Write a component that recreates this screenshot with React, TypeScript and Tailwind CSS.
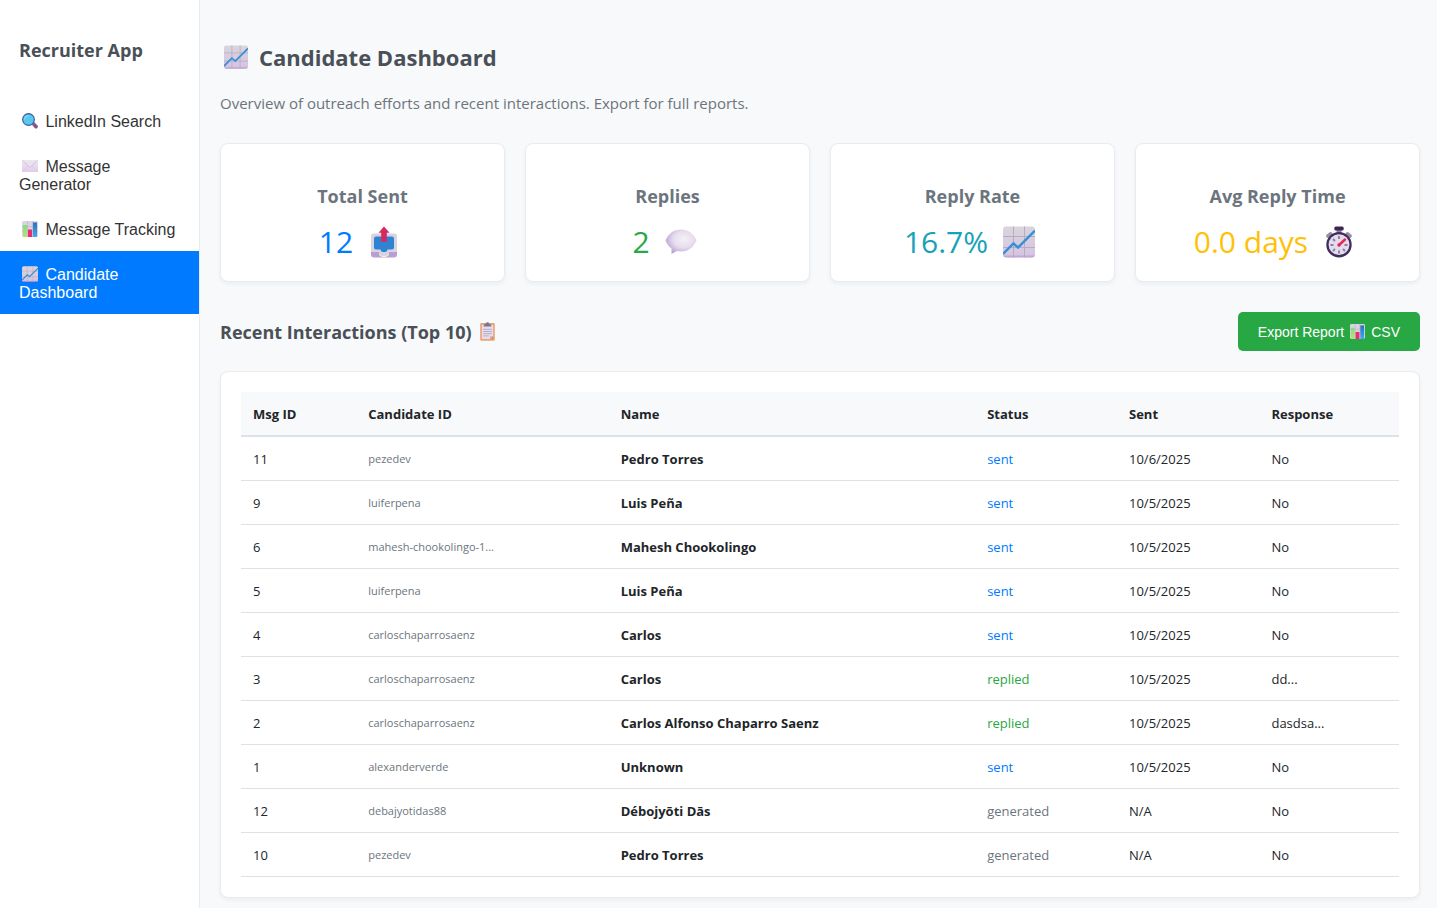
import { useId, type ReactNode } from 'react';

type IconProps = { className?: string };

function SearchIcon({ className }: IconProps) {
  return (
    <svg viewBox="0 0 32 32" className={className} aria-hidden="true">
      <path d="M20 19l3-2 8 8c1.600 2 .5 4.500-1 5.500s-3.200.6-4.500-.7L18.500 22z" fill="#835487" />
      <path d="M18 20.500l2.500-2.500 4 4-2.500 2.500z" fill="#8a7a9b" />
      <circle cx="13" cy="13" r="12.800" fill="#3c5a94" />
      <circle cx="13" cy="13" r="10.600" fill="#58c8ec" />
      <path d="M5 13a8 8 0 0 1 8-8" fill="none" stroke="#8fe0f6" strokeWidth="2" />
    </svg>
  );
}

function EnvelopeIcon({ className }: IconProps) {
  const id = useId();
  return (
    <svg viewBox="0 0 32 32" className={className} aria-hidden="true">
      <defs>
        <linearGradient id={id} x1="0" y1="0" x2="0" y2="1">
          <stop offset="0" stopColor="#eee6f2" />
          <stop offset="1" stopColor="#e2cdec" />
        </linearGradient>
      </defs>
      <rect x="0" y="4" width="32" height="24" rx="1" fill={`url(#${id})`} />
      <path d="M1 27l11-11M31 27L20 16" stroke="#d6c5e0" strokeWidth="1.200" />
      <path d="M1 5l13 12c1.300 1 2.700 1 4 0L31 5" fill="#ebe3ef" stroke="#c3b2cf" strokeWidth="1.300" />
    </svg>
  );
}

function BarChartIcon({ className }: IconProps) {
  const id = useId();
  return (
    <svg viewBox="0 0 32 32" className={className} aria-hidden="true">
      <defs>
        <linearGradient id={`${id}g`} x1="0" y1="0" x2="0" y2="1">
          <stop offset="0" stopColor="#7ce27c" />
          <stop offset="1" stopColor="#b5e36b" />
        </linearGradient>
        <linearGradient id={`${id}b`} x1="0" y1="0" x2="0" y2="1">
          <stop offset="0" stopColor="#2473bd" />
          <stop offset="1" stopColor="#48a7ee" />
        </linearGradient>
      </defs>
      <rect width="32" height="32" rx="3" fill="#dcd3e2" />
      <path d="M0 11h32M0 21h32M11 0v32M21 0v32" stroke="#b9b1c0" strokeWidth="1.300" />
      <rect x="2" y="8" width="8" height="24" fill={`url(#${id}g)`} />
      <rect x="12" y="17" width="8" height="15" fill="#e92c75" />
      <rect x="22" y="3" width="8" height="29" fill={`url(#${id}b)`} />
    </svg>
  );
}

function LineChartIcon({ className }: IconProps) {
  const id = useId();
  return (
    <svg viewBox="0 0 32 32" className={className} aria-hidden="true">
      <defs>
        <linearGradient id={id} x1="0" y1="0" x2="0" y2="1">
          <stop offset="0" stopColor="#d9d5dc" />
          <stop offset="0.900" stopColor="#d7c5e3" />
          <stop offset="1" stopColor="#b79aca" />
        </linearGradient>
      </defs>
      <rect y="0.500" width="32" height="31" rx="3" fill={`url(#${id})`} />
      <path d="M0 10.500h32M0 21.500h32M10.500 .5v31M21.500 .5v31" stroke="#b7acbd" strokeWidth="1" />
      <path d="M0 28L10.500 17.500l4.500 4L32 4.500" fill="none" stroke="#3490d8" strokeWidth="2.400" />
    </svg>
  );
}

function OutboxIcon({ className }: IconProps) {
  const id = useId();
  return (
    <svg viewBox="0 0 32 32" className={className} aria-hidden="true">
      <defs>
        <linearGradient id={id} x1="0" y1="0" x2="1" y2="0">
          <stop offset="0" stopColor="#e42a43" />
          <stop offset="1" stopColor="#c42a78" />
        </linearGradient>
      </defs>
      <rect x="3" y="9" width="26" height="22.500" rx="3" fill="#b89fd1" />
      <path d="M6 7.500h20a3 3 0 0 1 3 3V26h-8c-.8 3-2 3.500-5 3.500S11.800 29 11 26H3V10.500a3 3 0 0 1 3-3z" fill="#d8d3de" />
      <path d="M11 26.500c.8 2.500 2 3 5 3s4.200-.5 5-3v2c-1 2-2.500 2.500-5 2.500s-4-.5-5-2.500z" fill="#efedf2" />
      <path d="M8 10.500h16a2 2 0 0 1 2 2v9a2 2 0 0 1-2 2h-4.500c-.3 2-1.500 2.500-3.500 2.500s-3.200-.5-3.500-2.500H8a2 2 0 0 1-2-2v-9a2 2 0 0 1 2-2z" fill="#3083d3" />
      <path d="M16 .5l5.500 6.200h-2.700V16h-5.600V6.700h-2.700z" fill={`url(#${id})`} />
    </svg>
  );
}

function SpeechIcon({ className }: IconProps) {
  const id = useId();
  return (
    <svg viewBox="0 0 32 32" className={className} aria-hidden="true">
      <defs>
        <radialGradient id={id} cx="0.600" cy="0.400" r="0.620">
          <stop offset="0" stopColor="#f4f1f6" />
          <stop offset="0.550" stopColor="#e6dded" />
          <stop offset="1" stopColor="#bda6d4" />
        </radialGradient>
      </defs>
      <path
        d="M16 3.500c7 0 12.500 4 15.500 10.800C28.500 21.500 23.500 25.500 16 25.500c-1.400 0-2.700-.1-4-.4L6.500 28v-5.500C4 20.800 2 18.300.5 14.300 3.500 7.500 9 3.500 16 3.500z"
        fill={`url(#${id})`}
      />
    </svg>
  );
}

function StopwatchIcon({ className }: IconProps) {
  return (
    <svg viewBox="0 0 32 32" className={className} aria-hidden="true">
      <path d="M5 10l2.500-2M27 10L24.500 8" stroke="#998fa5" strokeWidth="3.800" strokeLinecap="round" />
      <rect x="13.500" y="4" width="5" height="4" fill="#8d8499" />
      <rect x="11.300" y=".5" width="9.400" height="4" rx="1.500" fill="#402452" />
      <circle cx="16" cy="18.700" r="12.700" fill="#3f2d5e" />
      <circle cx="16" cy="18.700" r="10.400" fill="#e4dcec" />
      <path
        d="M16 10v3M16 24.500v3M7.500 19h3M21.500 19h3M10 13l2 2M10 25l2-2M22 25l-2-2"
        stroke="#8c809c"
        strokeWidth="1.900"
      />
      <path d="M16 19l6-5.500" stroke="#ed2356" strokeWidth="2.400" strokeLinecap="round" />
      <circle cx="16" cy="19" r="1.700" fill="#d92862" />
    </svg>
  );
}

function ClipboardIcon({ className }: IconProps) {
  return (
    <svg viewBox="0 0 24 30" className={className} aria-hidden="true">
      <rect x=".3" y="1.500" width="23.400" height="28.300" rx="2" fill="#e8a578" />
      <path d="M3 4h18v18l-5 5H3z" fill="#e7dcef" />
      <path d="M21 22v5h-5z" fill="#dc8850" />
      <path d="M16 22h5l-5 5z" fill="#cbb8d9" />
      <path d="M6 7V3.500h3C9 1.500 10 .3 12 .3s3 1.200 3 3.200h3V7z" fill="#7f7588" />
      <path d="M5 11.500h14M5 15h14M5 18.500h14M5 22h9" stroke="#b2a5bf" strokeWidth="1.400" />
    </svg>
  );
}

const navItems = [
  { label: 'LinkedIn Search', Icon: SearchIcon, active: false },
  { label: 'Message Generator', Icon: EnvelopeIcon, active: false },
  { label: 'Message Tracking', Icon: BarChartIcon, active: false },
  { label: 'Candidate Dashboard', Icon: LineChartIcon, active: true },
];

const stats = [
  { label: 'Total Sent', value: '12', color: 'text-[#007bff]', Icon: OutboxIcon },
  { label: 'Replies', value: '2', color: 'text-[#28a745]', Icon: SpeechIcon },
  { label: 'Reply Rate', value: '16.7%', color: 'text-[#17a2b8]', Icon: LineChartIcon },
  { label: 'Avg Reply Time', value: '0.0 days', color: 'text-[#ffc107]', Icon: StopwatchIcon },
];

const statusColors: Record<string, string> = {
  sent: 'text-[#007bff]',
  replied: 'text-[#28a745]',
  generated: 'text-[#6c757d]',
};

const columns = [
  { label: 'Msg ID', width: 'w-[9.95%]' },
  { label: 'Candidate ID', width: 'w-[21.8%]' },
  { label: 'Name', width: 'w-[31.65%]' },
  { label: 'Status', width: 'w-[12.25%]' },
  { label: 'Sent', width: 'w-[12.3%]' },
  { label: 'Response', width: 'w-[12.05%]' },
];

const rows = [
  ['11', 'pezedev', 'Pedro Torres', 'sent', '10/6/2025', 'No'],
  ['9', 'luiferpena', 'Luis Peña', 'sent', '10/5/2025', 'No'],
  ['6', 'mahesh-chookolingo-1...', 'Mahesh Chookolingo', 'sent', '10/5/2025', 'No'],
  ['5', 'luiferpena', 'Luis Peña', 'sent', '10/5/2025', 'No'],
  ['4', 'carloschaparrosaenz', 'Carlos', 'sent', '10/5/2025', 'No'],
  ['3', 'carloschaparrosaenz', 'Carlos', 'replied', '10/5/2025', 'dd...'],
  ['2', 'carloschaparrosaenz', 'Carlos Alfonso Chaparro Saenz', 'replied', '10/5/2025', 'dasdsa...'],
  ['1', 'alexanderverde', 'Unknown', 'sent', '10/5/2025', 'No'],
  ['12', 'debajyotidas88', 'Débojyōti Dās', 'generated', 'N/A', 'No'],
  ['10', 'pezedev', 'Pedro Torres', 'generated', 'N/A', 'No'],
];

function Card({ className = '', children }: { className?: string; children: ReactNode }) {
  return (
    <div className={`rounded-lg border border-[#e9ecef] bg-white shadow-[0_2px_4px_rgba(0,0,0,0.05)] ${className}`}>
      {children}
    </div>
  );
}

export default function App() {
  return (
    <div className="flex min-h-screen bg-[#f8f9fa] font-['Open_Sans','Noto_Sans',sans-serif] text-[#212529]">
      <aside className="w-50 shrink-0 border-r border-[#e9ecef] bg-white pt-[35px]">
        <h3 className="mb-[33px] px-[19px] text-lg leading-[30px] font-bold text-[#495057]">Recruiter App</h3>
        <nav>
          {navItems.map(({ label, Icon, active }) => (
            <button
              key={label}
              type="button"
              className={`block w-full px-[19px] pt-[15px] pb-3 text-left font-['Liberation_Sans',Arial,sans-serif] text-base leading-[18px] ${
                active ? 'bg-[#007bff] text-white' : 'text-[#333333]'
              }`}
            >
              <Icon className="mr-[3px] ml-[3px] inline-block size-4 align-[-2px]" /> {label}
            </button>
          ))}
        </nav>
      </aside>

      <main className="min-w-0 flex-1 pt-[39px] pr-[17px] pb-2.5 pl-5">
        <h2 className="flex items-center gap-[11px] pl-1 text-[22px] leading-9 font-bold text-[#495057]">
          <LineChartIcon className="size-6" />
          Candidate Dashboard
        </h2>
        <p className="mt-4 text-[15px] leading-6 text-[#6c757d]">
          Overview of outreach efforts and recent interactions. Export for full reports.
        </p>

        <section className="mt-7 grid grid-cols-4 gap-5">
          {stats.map(({ label, value, color, Icon }) => (
            <Card key={label} className="px-5 pt-10 pb-[17px] text-center">
              <h4 className="text-lg leading-6 font-bold text-[#6c757d]">{label}</h4>
              <div className={`mt-[11px] flex items-center justify-center gap-[9px] text-3xl leading-[45px] ${color}`}>
                <span>{value}</span>
                <Icon className="mx-1.5 size-8" />
              </div>
            </Card>
          ))}
        </section>

        <div className="mt-[30px] flex items-center justify-between">
          <h3 className="flex items-center gap-2 text-lg leading-6 font-bold text-[#495057]">
            Recent Interactions (Top 10)
            <ClipboardIcon className="h-[19px] w-[15px]" />
          </h3>
          <button
            type="button"
            className="flex h-[39px] items-center gap-1.5 rounded-[5px] bg-[#28a745] px-5 font-['Liberation_Sans',Arial,sans-serif] text-sm text-white"
          >
            Export Report <BarChartIcon className="size-[15px]" /> CSV
          </button>
        </div>

        <Card className="mt-5 p-5">
          <table className="w-full table-fixed border-collapse text-left text-[13px] leading-5">
            <thead>
              <tr className="h-11 border-b-2 border-[#dee2e6] bg-[#f8f9fa]">
                {columns.map(({ label, width }) => (
                  <th key={label} scope="col" className={`px-3 font-bold ${width}`}>
                    {label}
                  </th>
                ))}
              </tr>
            </thead>
            <tbody>
              {rows.map(([id, candidate, name, status, sent, response]) => (
                <tr key={id} className="h-11 border-b border-[#dee2e6]">
                  <td className="px-3 pt-0.5">{id}</td>
                  <td className="px-3 pt-0.5 text-[11px] text-[#6c757d]">{candidate}</td>
                  <td className="px-3 pt-0.5 font-bold">{name}</td>
                  <td className={`px-3 pt-0.5 ${statusColors[status]}`}>{status}</td>
                  <td className="px-3 pt-0.5">{sent}</td>
                  <td className="px-3 pt-0.5">{response}</td>
                </tr>
              ))}
            </tbody>
          </table>
        </Card>
      </main>
    </div>
  );
}
